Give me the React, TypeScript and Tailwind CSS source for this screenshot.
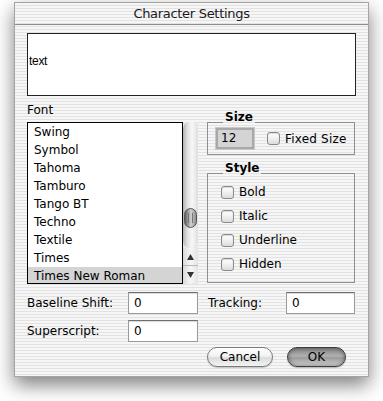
import React from "react";

const fonts = [
    "Swing",
    "Symbol",
    "Tahoma",
    "Tamburo",
    "Tango BT",
    "Techno",
    "Textile",
    "Times",
    "Times New Roman",
];

const stripes =
    "bg-fixed bg-[repeating-linear-gradient(180deg,#f6f6f6_0px,#f6f6f6_2px,#e2e2e2_2px,#e2e2e2_3px)]";

const Checkbox = () => (
    <div className="w-[13px] h-[13px] shrink-0 rounded-[3px] border border-[#8a8a8a] bg-[linear-gradient(#ffffff,#f0f0f0_50%,#dcdcdc)] shadow-[inset_0_1px_1px_rgba(0,0,0,0.15)]" />
);

const Field = ({ value, width }: { value: string; width: string }) => (
    <div
        className={`${width} h-[22px] shrink-0 border border-[#9a9a9a] border-t-[#6e6e6e] bg-white pl-[5px] text-[12px] leading-[20px] shadow-[inset_0_1px_1px_rgba(0,0,0,0.15)]`}
    >
        {value}
    </div>
);

const Legend = ({ children }: { children: React.ReactNode }) => (
    <span className={`absolute left-[15px] -top-[13px] px-[2px] text-[12px] font-bold leading-[14px] ${stripes}`}>
        {children}
    </span>
);

const ScrollBar = () => (
    <div className="w-[15px] h-[162px] flex flex-col bg-[#e8e8e8]">
        <div className="h-[126px] rounded-[7px] bg-[linear-gradient(to_right,#b4b4b4,#e2e2e2_30%,#f8f8f8_60%,#dedede)] flex flex-col pt-[86px]">
            <div className="mx-auto w-[13px] h-[20px] rounded-[7px] border border-[#555] bg-[linear-gradient(to_right,#626262,#a8a8a8_35%,#d2d2d2_55%,#8e8e8e)] flex items-center justify-center">
                <div className="w-[5px] h-[10px] border-x border-[#777]" />
            </div>
        </div>
        <div className="h-[18px] flex items-center justify-center border-b border-[#b8b8b8] bg-[linear-gradient(to_right,#dadada,#f6f6f6,#e4e4e4)]">
            <svg width="7" height="6" viewBox="0 0 7 6">
                <polygon points="3.5,0 7,6 0,6" fill="#333" />
            </svg>
        </div>
        <div className="h-[18px] flex items-center justify-center bg-[linear-gradient(to_right,#dadada,#f6f6f6,#e4e4e4)]">
            <svg width="7" height="6" viewBox="0 0 7 6">
                <polygon points="0,0 7,0 3.5,6" fill="#333" />
            </svg>
        </div>
    </div>
);

const App = () => {
    return (
        <div className="w-[383px] h-[401px] overflow-hidden bg-white font-['DejaVu_Sans',sans-serif] text-black">
            <div className={`ml-[14px] mt-[2px] w-[355px] h-[375px] border border-[#a4a4a4] flex flex-col shadow-[0_8px_18px_rgba(0,0,0,0.5)] ${stripes}`}>
                <div className="h-[22px] border-b border-[#8c8c8c] flex items-center justify-center text-[13px] tracking-[-0.3px] text-[#1a1a1a]">
                    Character Settings
                </div>

                <div className="px-[12px] pt-[8px] flex flex-col">
                    <div className="h-[63px] border border-[#222] bg-white flex items-center pb-[7px] pl-[1px] font-['Liberation_Sans',sans-serif] text-[12px] tracking-[-0.3px]">
                        text
                    </div>

                    <div className="mt-[7px] flex items-start">
                        <div className="flex flex-col">
                            <div className="h-[15px] leading-[15px] text-[12px]">Font</div>
                            <div className="mt-[4px] flex">
                                <div className="w-[156px] h-[162px] border border-black bg-white overflow-hidden">
                                    {fonts.map((f) => (
                                        <div
                                            key={f}
                                            className={`h-[18px] leading-[18px] pl-[6px] text-[12px] ${f === "Times New Roman" ? "bg-[#d4d4d4]" : ""}`}
                                        >
                                            {f}
                                        </div>
                                    ))}
                                </div>
                                <ScrollBar />
                            </div>
                        </div>

                        <div className="ml-[9px] mt-[19px] w-[148px] flex flex-col">
                            <div className="relative h-[33px] border border-[#8f8f8f] flex items-center pl-[8px]">
                                <Legend>Size</Legend>
                                <div className="w-[38px] h-[21px] border-2 border-[#a8a8a8] bg-[#d4d4d4] pl-[3px] text-[12px] leading-[17px] shadow-[0_0_0_1px_#c8c8c8]">
                                    12
                                </div>
                                <div className="ml-[13px] flex items-center">
                                    <Checkbox />
                                    <span className="ml-[5px] text-[12px] tracking-[0.2px]">Fixed Size</span>
                                </div>
                            </div>

                            <div className="relative mt-[18px] h-[110px] border border-[#8f8f8f] pl-[13px] pt-[6px] flex flex-col">
                                <Legend>Style</Legend>
                                {["Bold", "Italic", "Underline", "Hidden"].map((s) => (
                                    <div key={s} className="h-[24px] flex items-center">
                                        <Checkbox />
                                        <span className="ml-[5px] text-[12px]">{s}</span>
                                    </div>
                                ))}
                            </div>
                        </div>
                    </div>

                    <div className="mt-[8px] flex items-center">
                        <div className="w-[101px] text-[12px]">Baseline Shift:</div>
                        <Field value="0" width="w-[70px]" />
                        <div className="ml-[10px] w-[78px] text-[12px]">Tracking:</div>
                        <Field value="0" width="w-[69px]" />
                    </div>

                    <div className="mt-[6px] flex items-center">
                        <div className="w-[101px] text-[12px]">Superscript:</div>
                        <Field value="0" width="w-[70px]" />
                    </div>

                    <div className="mt-[5px] flex justify-end gap-[14px] pr-[10px]">
                        <button className="w-[66px] h-[20px] rounded-full border border-[#7a7a7a] bg-[linear-gradient(#ffffff,#f2f2f2_45%,#dcdcdc_55%,#f4f4f4)] text-[12px] leading-[18px] shadow-[0_1px_1px_rgba(0,0,0,0.2)]">
                            Cancel
                        </button>
                        <button className="w-[59px] h-[20px] rounded-full border border-[#3c3c3c] bg-[linear-gradient(#858585,#b0b0b0_45%,#9a9a9a_55%,#d6d6d6)] text-[12px] leading-[18px] shadow-[inset_0_0_4px_rgba(0,0,0,0.45),0_1px_1px_rgba(0,0,0,0.25)]">
                            OK
                        </button>
                    </div>
                </div>
            </div>
        </div>
    );
};

export default App;
